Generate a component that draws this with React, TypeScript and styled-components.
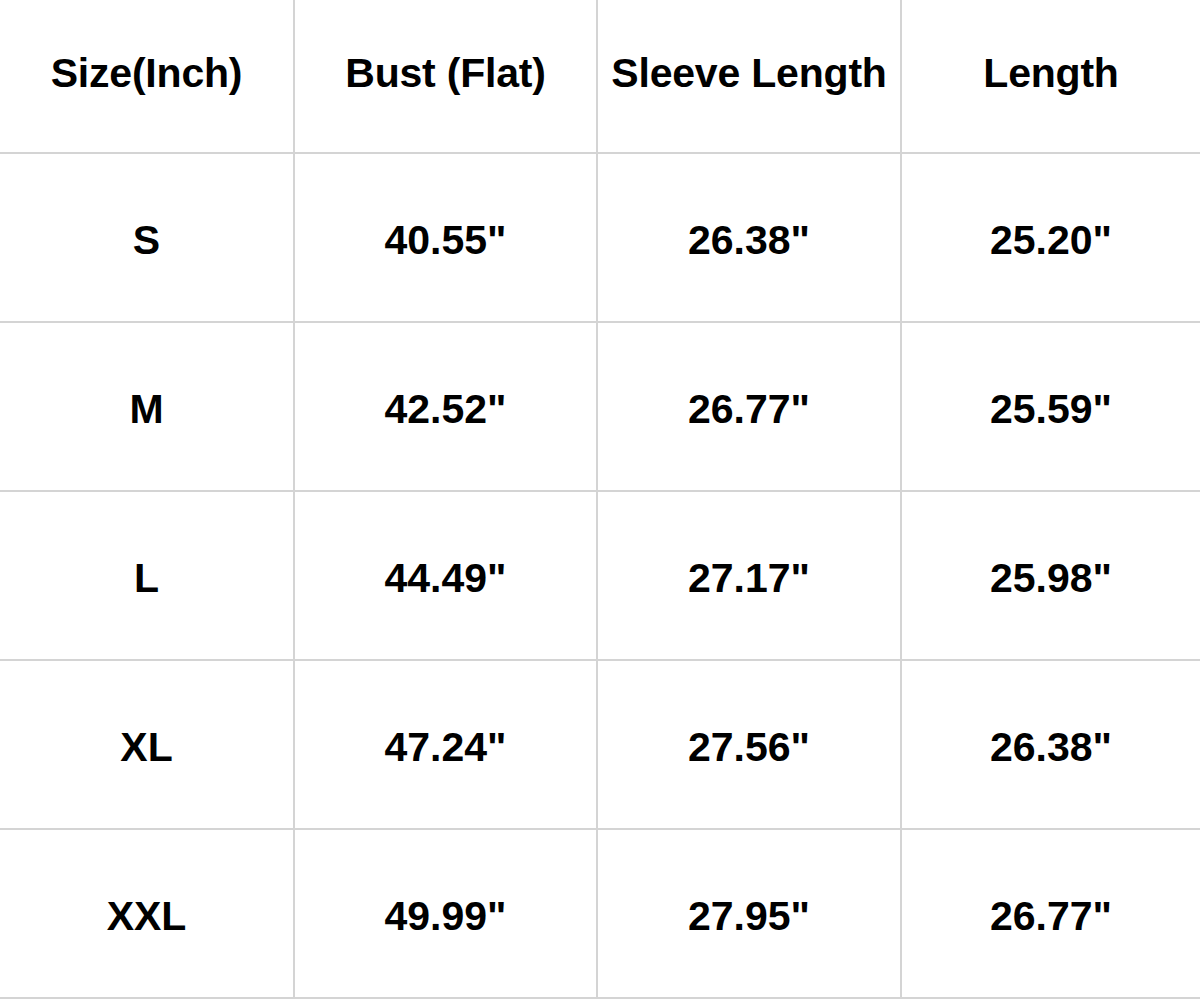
import React from "react";
import styled, { createGlobalStyle } from "styled-components";

const GlobalStyle = createGlobalStyle`
  html, body {
    margin: 0;
    padding: 0;
    background: #ffffff;
  }
  body {
    font-family: "Liberation Sans", Arial, sans-serif;
  }
`;

const header = ["Size(Inch)", "Bust (Flat)", "Sleeve Length", "Length"];

const rows = [
  ["S", '40.55"', '26.38"', '25.20"'],
  ["M", '42.52"', '26.77"', '25.59"'],
  ["L", '44.49"', '27.17"', '25.98"'],
  ["XL", '47.24"', '27.56"', '26.38"'],
  ["XXL", '49.99"', '27.95"', '26.77"'],
];

const App = () => {
  return (
    <>
      <GlobalStyle />
      <Table>
        {header.map((h, i) => (
          <Cell key={h} $head $last={i === header.length - 1}>
            {h}
          </Cell>
        ))}
        {rows.map((row) =>
          row.map((v, i) => (
            <Cell key={row[0] + i} $last={i === row.length - 1}>
              {v}
            </Cell>
          ))
        )}
      </Table>
    </>
  );
};

export default App;

const Table = styled.div`
  display: grid;
  grid-template-columns: 295px 303px 304px 1fr;
  grid-template-rows: 154px repeat(5, 169px);
  width: 1200px;
  background: #fff;
`;

const Cell = styled.div<{ $head?: boolean; $last?: boolean }>`
  display: flex;
  align-items: center;
  justify-content: center;
  box-sizing: border-box;
  border-bottom: 2px solid #d4d4d4;
  border-right: ${(p) => (p.$last ? "none" : "2px solid #d4d4d4")};
  font-size: 41px;
  font-weight: 700;
  color: #000;
  padding-top: ${(p) => (p.$head ? "0" : "5px")};
  padding-bottom: ${(p) => (p.$head ? "6px" : "0")};
  padding-left: ${(p) => (p.$head ? "0" : "0")};
  letter-spacing: ${(p) => (p.$head ? "-0.2px" : "0")};
`;
